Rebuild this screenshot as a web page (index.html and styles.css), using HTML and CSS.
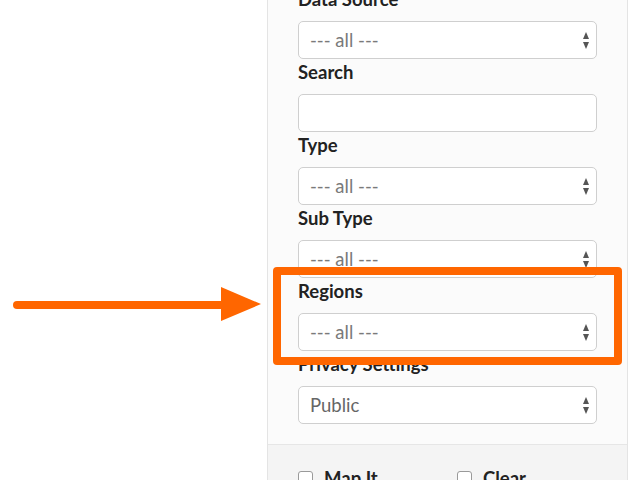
FILE: index.html
```html
<!DOCTYPE html>
<html>
<head>
  <title>Filters</title>
  <link rel="stylesheet" href="styles.css">
</head>
<body>
  <div class="page">
    <svg class="pointer" width="270" height="50" viewBox="0 280 270 50">
      <line x1="17" y1="305" x2="224" y2="305" stroke="#ff6600" stroke-width="8" stroke-linecap="round" />
      <polygon points="221,287 261,304 221,321" fill="#ff6600" />
    </svg>

    <aside class="filters">
      <div class="filters-body">
        <div class="field">
          <label for="source">Data Source</label>
          <div class="select">
            <select id="source"><option>--- all ---</option></select>
          </div>
        </div>

        <div class="field">
          <label for="search">Search</label>
          <input type="text" id="search" />
        </div>

        <div class="field">
          <label for="type">Type</label>
          <div class="select">
            <select id="type"><option>--- all ---</option></select>
          </div>
        </div>

        <div class="field">
          <label for="subtype">Sub Type</label>
          <div class="select">
            <select id="subtype"><option>--- all ---</option></select>
          </div>
        </div>

        <div class="field">
          <label for="regions">Regions</label>
          <div class="select">
            <select id="regions"><option>--- all ---</option></select>
          </div>
        </div>

        <div class="field">
          <label for="privacy">Privacy Settings</label>
          <div class="select">
            <select id="privacy" class="chosen"><option>Public</option><option>Private</option></select>
          </div>
        </div>
      </div>

      <div class="filters-foot">
        <label class="check"><input type="checkbox" /> Map It</label>
        <label class="check"><input type="checkbox" /> Clear</label>
      </div>
    </aside>

    <div class="highlight"></div>
  </div>
</body>
</html>
```

FILE: styles.css
```css
body {
  margin: 0;
  background-color: #ffffff;
  font-family: Lato, "Open Sans", sans-serif;
  color: #222222;
  overflow: hidden;
}

.page {
  position: relative;
  display: flex;
  padding-left: 267px;
  height: 480px;
  overflow: hidden;
}

.pointer {
  position: absolute;
  left: 0;
  top: 280px;
}

.highlight {
  position: absolute;
  left: 273px;
  top: 267px;
  width: 349px;
  height: 98px;
  box-sizing: border-box;
  border: 8px solid #ff6600;
  border-radius: 4px;
}

.filters {
  width: 361px;
  margin-top: -15px;
  border: 1px solid #e4e4e4;
  background-color: #fbfbfb;
  box-sizing: border-box;
  align-self: flex-start;
}

.filters-body {
  padding: 0 30px 20px;
}

.field label {
  display: block;
  font-size: 18.5px;
  font-weight: bold;
  line-height: 24px;
  padding-top: 1px;
  margin-bottom: 10px;
  color: #222222;
}

.field select,
.field input {
  display: block;
  width: 100%;
  height: 38px;
  box-sizing: border-box;
  border: 1px solid #cfcfcf;
  border-radius: 5px;
  background-color: #ffffff;
  font-family: Lato, "Open Sans", sans-serif;
  font-size: 18.5px;
  padding: 0 30px 0 11px;
  margin: 0;
  outline: none;
}

.field select {
  appearance: none;
  -webkit-appearance: none;
  color: #7a7a7a;
}

.field select.chosen {
  color: #666666;
}

.select {
  position: relative;
}

.select::before,
.select::after {
  content: "";
  position: absolute;
  right: 8px;
  width: 0;
  height: 0;
  border-left: 3.5px solid transparent;
  border-right: 3.5px solid transparent;
}

.select::before {
  top: 11px;
  border-bottom: 7px solid #555555;
}

.select::after {
  top: 21px;
  border-top: 7px solid #555555;
}

.filters-foot {
  border-top: 1px solid #e6e6e6;
  background-color: #f4f4f4;
  padding: 25px 30px 30px;
  display: flex;
}

.check {
  display: flex;
  align-items: center;
  flex-shrink: 0;
  width: 159px;
  font-size: 18.5px;
  font-weight: bold;
  line-height: 16px;
  color: #222222;
}

.check:last-child {
  width: auto;
}

.check input {
  appearance: none;
  -webkit-appearance: none;
  width: 15px;
  height: 15px;
  margin: 0 11px 0 0;
  border: 1px solid #9a9a9a;
  border-radius: 3px;
  background-color: #ffffff;
}
```
